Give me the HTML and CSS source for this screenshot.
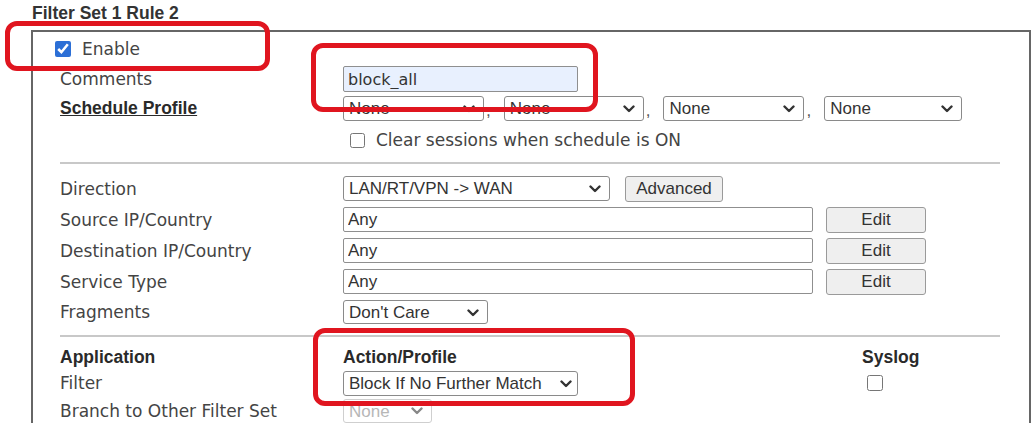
FILE: index.html
```html
<!DOCTYPE html>
<html>
<head>
<meta charset="utf-8">
<link rel="stylesheet" href="styles.css">
</head>
<body>
<div class="title">Filter Set 1 Rule 2</div>
<div class="frame">
  <div class="row h30">
    <label class="chk enable"><input type="checkbox" class="cb-on" checked><span>Enable</span></label>
  </div>
  <div class="row h30">
    <span class="lbl">Comments</span>
    <div class="ctl"><input type="text" class="txt comment" value="block_all"></div>
  </div>
  <div class="row h28">
    <span class="lbl head u">Schedule Profile</span>
    <div class="ctl">
      <span class="sw"><select class="sel s141"><option>None</option></select><svg class="chev" viewBox="0 0 12 8"><path d="M1.5 1.5 L6 6 L10.5 1.5"/></svg></span><span class="comma">,</span>
      <span class="sw"><select class="sel s140"><option>None</option></select><svg class="chev" viewBox="0 0 12 8"><path d="M1.5 1.5 L6 6 L10.5 1.5"/></svg></span><span class="comma">,</span>
      <span class="sw"><select class="sel s141"><option>None</option></select><svg class="chev" viewBox="0 0 12 8"><path d="M1.5 1.5 L6 6 L10.5 1.5"/></svg></span><span class="comma">,</span>
      <span class="sw"><select class="sel s138"><option>None</option></select><svg class="chev" viewBox="0 0 12 8"><path d="M1.5 1.5 L6 6 L10.5 1.5"/></svg></span>
    </div>
  </div>
  <div class="row h36">
    <span class="lbl"></span>
    <label class="chk clear"><input type="checkbox" class="cb-off"><span>Clear sessions when schedule is ON</span></label>
  </div>
  <div class="sep sep1"></div>
  <div class="row h31">
    <span class="lbl">Direction</span>
    <div class="ctl">
      <span class="sw"><select class="sel dir"><option>LAN/RT/VPN -&gt; WAN</option></select><svg class="chev" viewBox="0 0 12 8"><path d="M1.5 1.5 L6 6 L10.5 1.5"/></svg></span>
      <button class="btn adv">Advanced</button>
    </div>
  </div>
  <div class="row h31">
    <span class="lbl">Source IP/Country</span>
    <div class="ctl"><input type="text" class="txt wide" value="Any"><button class="btn edit">Edit</button></div>
  </div>
  <div class="row h31">
    <span class="lbl">Destination IP/Country</span>
    <div class="ctl"><input type="text" class="txt wide" value="Any"><button class="btn edit">Edit</button></div>
  </div>
  <div class="row h31">
    <span class="lbl">Service Type</span>
    <div class="ctl"><input type="text" class="txt wide" value="Any"><button class="btn edit">Edit</button></div>
  </div>
  <div class="row h30">
    <span class="lbl">Fragments</span>
    <div class="ctl"><span class="sw"><select class="sel frag"><option>Don't Care</option></select><svg class="chev" viewBox="0 0 12 8"><path d="M1.5 1.5 L6 6 L10.5 1.5"/></svg></span></div>
  </div>
  <div class="sep sep2"></div>
  <div class="row3 h24 hdr">
    <span class="head">Application</span>
    <span class="head">Action/Profile</span>
    <span class="head">Syslog</span>
  </div>
  <div class="row3 h28">
    <span class="lbl">Filter</span>
    <div class="ctl"><span class="sw"><select class="sel act"><option>Block If No Further Match</option></select><svg class="chev" viewBox="0 0 12 8"><path d="M1.5 1.5 L6 6 L10.5 1.5"/></svg></span></div>
    <div class="sys"><input type="checkbox" class="cb-off"></div>
  </div>
  <div class="row3 h28">
    <span class="lbl">Branch to Other Filter Set</span>
    <div class="ctl"><span class="sw"><select class="sel branch" disabled><option>None</option></select><svg class="chev dim" viewBox="0 0 12 8"><path d="M1.5 1.5 L6 6 L10.5 1.5"/></svg></span></div>
    <div></div>
  </div>
</div>
<div class="mark m1"></div>
<div class="mark m2"></div>
<div class="mark m3"></div>
</body>
</html>
```
FILE: styles.css
```css
html, body {
  margin: 0;
  padding: 0;
  overflow: hidden;
  background: #fff;
  height: 423px;
}
body {
  font-family: "DejaVu Sans", Verdana, sans-serif;
  font-size: 17px;
  color: #444;
  position: relative;
}
.title {
  font-family: "Liberation Sans", Arial, sans-serif;
  font-weight: bold;
  font-size: 17.5px;
  line-height: 20px;
  color: #333;
  padding: 3px 0 0 32px;
  height: 21px;
  margin-bottom: 6px;
}
.frame {
  margin-left: 31px;
  width: 1000px;
  box-sizing: border-box;
  height: 393px;
  overflow: hidden;
  border: 2px solid #666;
  border-bottom: none;
  padding: 2px 29px 0 27px;
}
.row {
  display: grid;
  grid-template-columns: 283px 1fr;
  align-items: center;
}
.row3 {
  display: grid;
  grid-template-columns: 283px 519px 1fr;
  align-items: center;
}
.h24 { height: 24px; }
.h28 { height: 28px; }
.h30 { height: 30px; }
.h31 { height: 31px; }
.h36 { height: 36px; }
.lbl {
  white-space: nowrap;
  color: #444;
}
.head {
  font-family: "Liberation Sans", Arial, sans-serif;
  font-weight: bold;
  font-size: 17.5px;
  color: #2a2a2a;
  white-space: nowrap;
}
.u { text-decoration: underline; }
.ctl {
  display: flex;
  align-items: center;
}
.chk {
  display: flex;
  align-items: center;
  white-space: nowrap;
}
.enable {
  margin-left: -5px;
  grid-column: 1 / span 2;
}
.enable input {
  width: 16px;
  height: 16px;
  margin: 0 11px 0 0;
  accent-color: #2c6fd6;
}
.clear {
  margin-left: 7px;
}
.clear input {
  width: 15px;
  height: 15px;
  margin: 0 11px 0 0;
}
.sys input {
  width: 16px;
  height: 16px;
  margin: 0 0 0 5px;
  display: block;
}
.txt {
  box-sizing: border-box;
  font-family: "Liberation Sans", Arial, sans-serif;
  font-size: 17px;
  color: #333;
  border: 1px solid #8f8f8f;
  border-radius: 2px;
  padding: 0 4px;
  margin: 0;
  background: #fff;
  height: 25px;
}
.comment {
  width: 235px;
  height: 26px;
  background: #e8f0fe;
  font-family: "DejaVu Sans", Verdana, sans-serif;
  font-size: 16px;
  color: #333;
}
.wide { width: 470px; }
.sw {
  position: relative;
  display: inline-block;
  line-height: 0;
}
.sel {
  box-sizing: border-box;
  -webkit-appearance: none;
  appearance: none;
  font-family: "Liberation Sans", Arial, sans-serif;
  font-size: 17px;
  color: #333;
  height: 25px;
  border: 1px solid #8a8a8a;
  border-radius: 3px;
  background-color: #fff;
  margin: 0;
  padding: 0 24px 0 5px;
}
.chev {
  position: absolute;
  right: 9px;
  top: 9px;
  width: 12px;
  height: 8px;
  fill: none;
  stroke: #333;
  stroke-width: 2.4;
  stroke-linecap: round;
  stroke-linejoin: round;
  pointer-events: none;
}
.chev.dim { stroke: #888; top: 8px; }
.s141 { width: 141px; }
.s140 { width: 140px; }
.s138 { width: 138px; }
.comma {
  font-family: "Liberation Sans", Arial, sans-serif;
  font-size: 17px;
  color: #555;
  margin: 0 13px 0 2px;
  align-self: flex-end;
  line-height: 20px;
}
.dir { width: 267px; }
.frag { width: 145px; height: 24px; }
.act { width: 235px; padding-right: 20px; }
.act + .chev { right: 6px; }
.branch { width: 89px; height: 24px; color: #999; border-color: #bbb; background: #fff; }
.btn {
  box-sizing: border-box;
  font-family: "Liberation Sans", Arial, sans-serif;
  font-size: 17px;
  color: #333;
  background: #efefef;
  border: 1px solid #9a9a9a;
  border-radius: 3px;
  height: 26px;
  padding: 0;
  margin: 0;
}
.adv { width: 98px; margin-left: 15px; }
.edit { width: 100px; margin-left: 13px; }
.sep {
  border-top: 2px solid #c8c8c8;
}
.sep1 { margin-top: 4px; margin-bottom: 9px; }
.sep2 { margin-top: 8px; }
.hdr { margin-top: 8px; }
.mark {
  position: absolute;
  box-sizing: border-box;
  border: 5px solid #e0151f;
  border-radius: 12px;
}
.m1 { left: 5px; top: 21px; width: 265px; height: 50px; }
.m2 { left: 311px; top: 43px; width: 287px; height: 69px; }
.m3 { left: 313px; top: 328px; width: 322px; height: 78px; }
```
